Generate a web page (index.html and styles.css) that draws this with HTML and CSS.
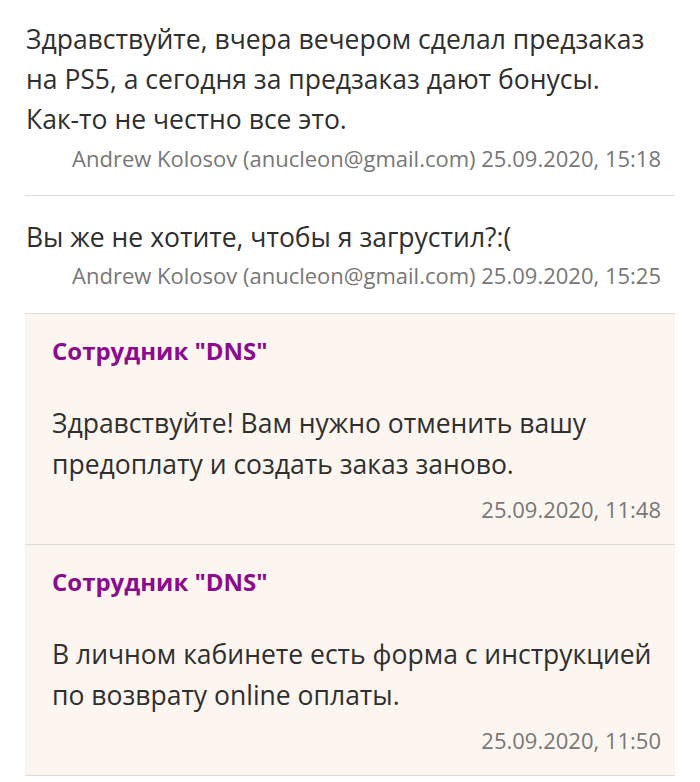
FILE: index.html
```html
<!DOCTYPE html>
<html lang="ru">
<head>
<meta charset="utf-8">
<link rel="stylesheet" href="styles.css">
</head>
<body>
<div class="thread">
  <div class="msg msg-first">
    <div class="text">Здравствуйте, вчера вечером сделал предзаказ на PS5, а сегодня за предзаказ дают бонусы. <span class="nowrap">Как-то</span> не честно все это.</div>
    <div class="meta">Andrew Kolosov (anucleon@gmail.com) 25.09.2020, 15:18</div>
  </div>
  <div class="msg">
    <div class="text">Вы же не хотите, чтобы я загрустил?:(</div>
    <div class="meta">Andrew Kolosov (anucleon@gmail.com) 25.09.2020, 15:25</div>
  </div>
  <div class="msg staff">
    <div class="author">Сотрудник "DNS"</div>
    <div class="text">Здравствуйте! Вам нужно отменить вашу предоплату и создать заказ заново.</div>
    <div class="meta">25.09.2020, 11:48</div>
  </div>
  <div class="msg staff">
    <div class="author">Сотрудник "DNS"</div>
    <div class="text">В личном кабинете есть форма с инструкцией по возврату online оплаты.</div>
    <div class="meta">25.09.2020, 11:50</div>
  </div>
</div>
</body>
</html>
```
FILE: styles.css
```css
html, body {
  margin: 0;
  padding: 0;
  background: #ffffff;
}
body {
  font-family: "Open Sans", "Noto Sans", sans-serif;
  color: #2f2f2f;
}
.thread {
  width: 650px;
  margin-left: 25px;
}
.msg {
  padding: 21px 14px 24px 1px;
  border-bottom: 1px solid #dcdcdc;
}
.msg-first {
  padding-top: 19px;
  padding-bottom: 23px;
}
.nowrap {
  white-space: nowrap;
}
.text {
  font-size: 26.5px;
  line-height: 40px;
}
.meta {
  font-size: 22px;
  line-height: 28px;
  color: #777777;
  text-align: right;
  margin-top: 5px;
}
.msg + .msg .meta {
  margin-top: 4px;
}
.staff {
  background: #fdf6f0;
  padding: 21px 14px 21px 27px;
}
.author {
  font-size: 24px;
  line-height: 32px;
  font-weight: 700;
  color: #8b0a8e;
  margin-bottom: 36px;
}
.staff .text {
  line-height: 41px;
}
.msg.staff .meta {
  margin-top: 10px;
}
```
